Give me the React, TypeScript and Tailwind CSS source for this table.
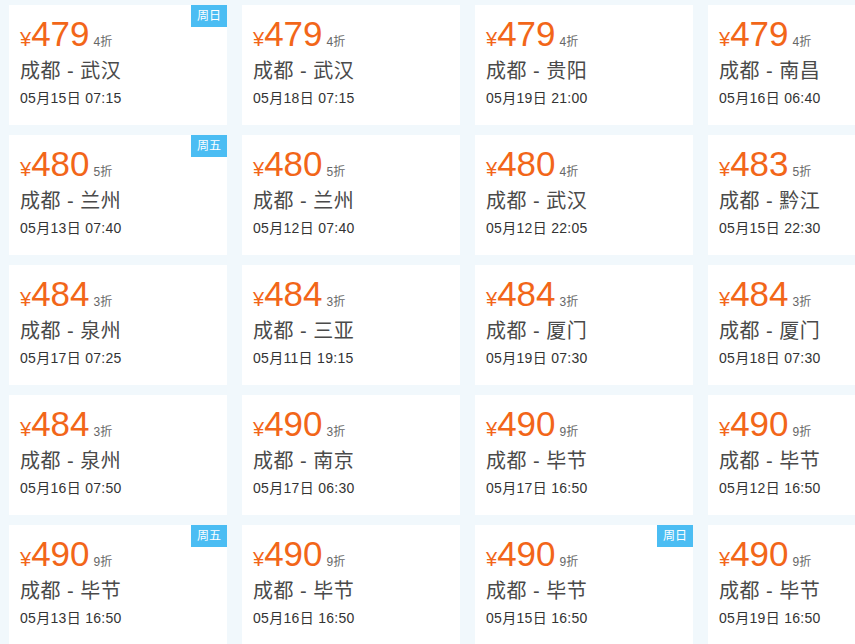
type Fare = {
  price: number;
  discount: string;
  city: string;
  time: string;
  badge?: string;
};

const fares: Fare[] = [
  { price: 479, discount: "4折", city: "武汉", time: "05月15日 07:15", badge: "周日" },
  { price: 479, discount: "4折", city: "武汉", time: "05月18日 07:15" },
  { price: 479, discount: "4折", city: "贵阳", time: "05月19日 21:00" },
  { price: 479, discount: "4折", city: "南昌", time: "05月16日 06:40" },
  { price: 480, discount: "5折", city: "兰州", time: "05月13日 07:40", badge: "周五" },
  { price: 480, discount: "5折", city: "兰州", time: "05月12日 07:40" },
  { price: 480, discount: "4折", city: "武汉", time: "05月12日 22:05" },
  { price: 483, discount: "5折", city: "黔江", time: "05月15日 22:30" },
  { price: 484, discount: "3折", city: "泉州", time: "05月17日 07:25" },
  { price: 484, discount: "3折", city: "三亚", time: "05月11日 19:15" },
  { price: 484, discount: "3折", city: "厦门", time: "05月19日 07:30" },
  { price: 484, discount: "3折", city: "厦门", time: "05月18日 07:30" },
  { price: 484, discount: "3折", city: "泉州", time: "05月16日 07:50" },
  { price: 490, discount: "3折", city: "南京", time: "05月17日 06:30" },
  { price: 490, discount: "9折", city: "毕节", time: "05月17日 16:50" },
  { price: 490, discount: "9折", city: "毕节", time: "05月12日 16:50" },
  { price: 490, discount: "9折", city: "毕节", time: "05月13日 16:50", badge: "周五" },
  { price: 490, discount: "9折", city: "毕节", time: "05月16日 16:50" },
  { price: 490, discount: "9折", city: "毕节", time: "05月15日 16:50", badge: "周日" },
  { price: 490, discount: "9折", city: "毕节", time: "05月19日 16:50" },
];

function FareCard({ fare }: { fare: Fare }) {
  return (
    <div className="relative h-[120px] w-[218px] bg-white pl-[11px] pt-[12px]">
      {fare.badge ? (
        <span className="absolute right-0 top-0 flex h-[22px] w-[36px] items-center justify-center bg-[#4bbdf3] text-[12px] text-white">
          {fare.badge}
        </span>
      ) : null}
      <div className="flex items-baseline text-[#f26619]">
        <span className="text-[20px] leading-[34px]">¥</span>
        <span className="text-[35px] leading-[34px]">{fare.price}</span>
        <span className="ml-[4px] text-[12px] text-[#666]">{fare.discount}</span>
      </div>
      <p className="mt-[1px] text-[20px] leading-[28px] tracking-[0.5px] text-[#4a4a4a]">
        成都 - {fare.city}
      </p>
      <p className="mt-[3px] text-[14px] leading-[20px] tracking-[0.3px] text-[#333]">
        {fare.time}
      </p>
    </div>
  );
}

export default function App() {
  return (
    <div
      className="h-[644px] w-[855px] overflow-hidden bg-[#f1f8fc] pl-[9px] pt-[5px]"
      style={{ fontFamily: '"Liberation Sans", "Noto Sans CJK SC", sans-serif' }}
    >
      <div className="grid grid-cols-[repeat(4,218px)] gap-x-[15px] gap-y-[10px]">
        {fares.map((fare, i) => (
          <FareCard fare={fare} key={i} />
        ))}
      </div>
    </div>
  );
}
